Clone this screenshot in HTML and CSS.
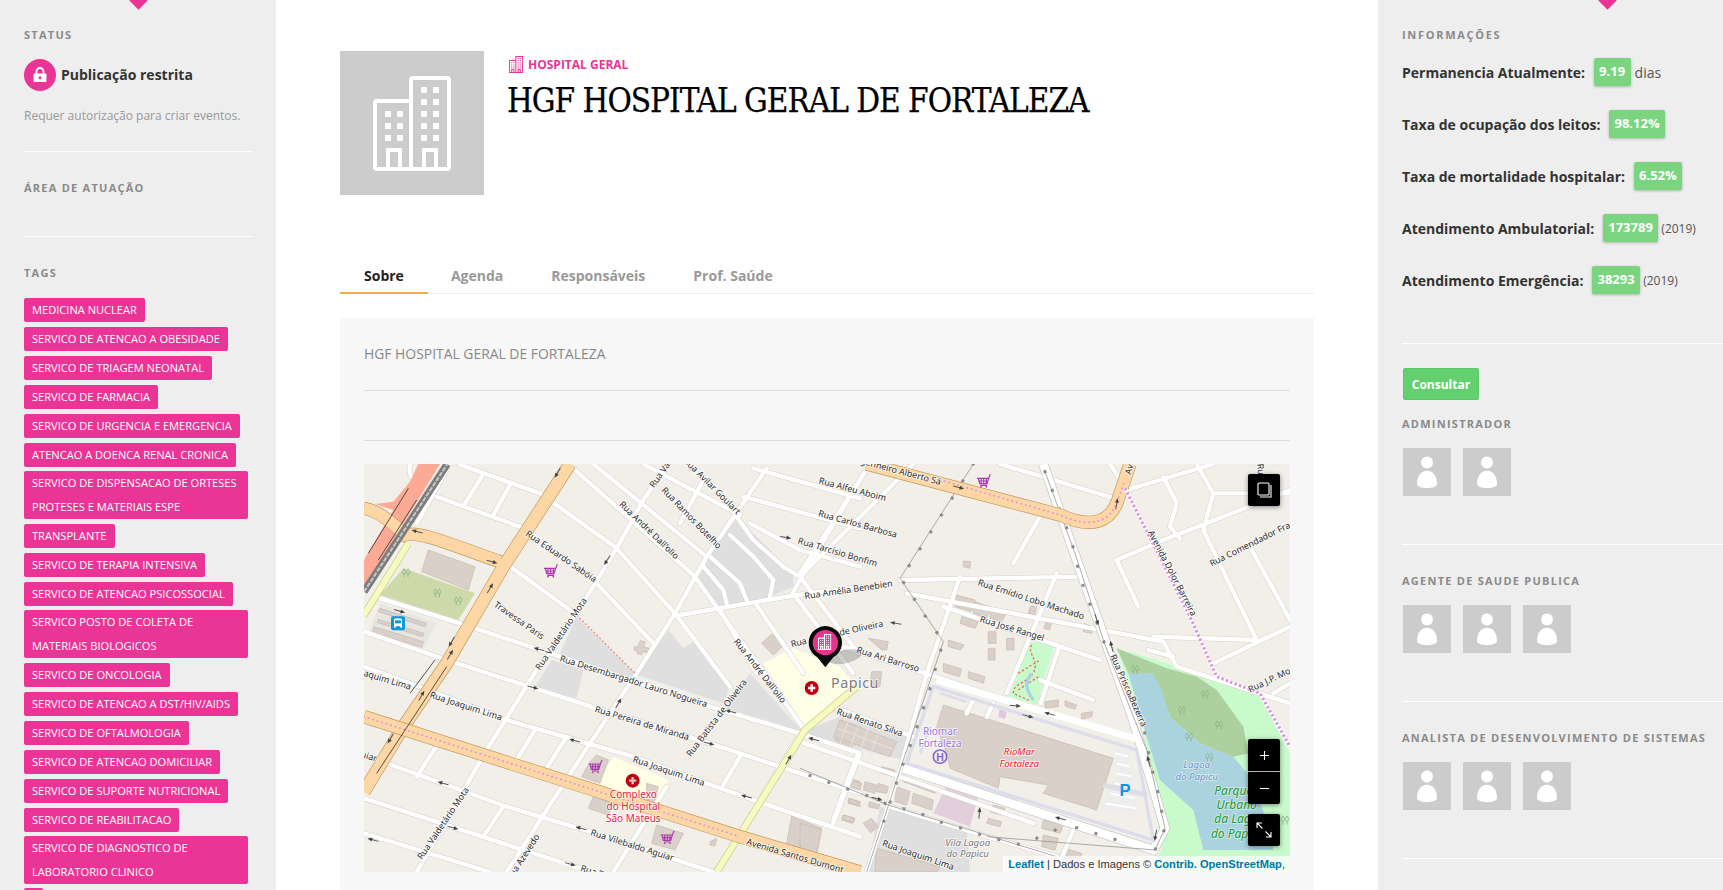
FILE: index.html
```html
<!DOCTYPE html>
<html lang="pt-BR">
<head>
<meta charset="utf-8">
<title>HGF Hospital Geral de Fortaleza</title>
<link rel="stylesheet" href="styles.css">
</head>
<body>
<svg class="defs" width="0" height="0" aria-hidden="true">
  <defs>
    <symbol id="building" viewBox="8 6 78 95">
      <path class="b-line" d="M10 99V33q0-2 2-2H46V10q0-2 2-2H82q2 0 2 2V97q0 2-2 2H12q-2 0-2-2ZM46 31V99M23 97V80H35V97M59 97V80H71V97"/>
      <path class="b-fill" d="M56 17h6v6h-6zM68 17h6v6h-6zM56 29h6v6h-6zM68 29h6v6h-6zM56 41h6v6h-6zM68 41h6v6h-6zM56 53h6v6h-6zM68 53h6v6h-6zM56 65h6v6h-6zM68 65h6v6h-6zM20 41h6v6h-6zM32 41h6v6h-6zM20 53h6v6h-6zM32 53h6v6h-6zM20 65h6v6h-6zM32 65h6v6h-6z"/>
    </symbol>
    <symbol id="person" viewBox="0 0 48 48">
      <circle class="p-fill" cx="24" cy="14.5" r="6"/>
      <path class="p-fill" d="M14 36C14 28 18 22.700 24 22.700S34 28 34 36C34 41.500 14 41.500 14 36Z"/>
    </symbol>
  </defs>
</svg>
<div class="page">
  <aside class="left">
    <span class="notch"></span>
    <section class="l-sec">
      <h4 class="label">Status</h4>
      <div class="status">
        <span class="status-ic">
          <svg width="14" height="16" viewBox="0 0 14 16"><path class="lock-arc" d="M3.500 7V4.500a3.500 3.500 0 0 1 7 0V7"/><path class="lock-body" fill-rule="evenodd" d="M1.500 6.500h11a1 1 0 0 1 1 1v6.500a1 1 0 0 1-1 1h-11a1 1 0 0 1-1-1V7.500a1 1 0 0 1 1-1ZM7 9.300a1.500 1.500 0 1 0 0 3 1.500 1.500 0 0 0 0-3Z"/></svg>
        </span>
        <strong>Publicação restrita</strong>
      </div>
      <p class="desc">Requer autorização para criar eventos.</p>
    </section>
    <section class="l-sec area">
      <h4 class="label">Área de atuação</h4>
    </section>
    <section class="l-sec tags-sec">
      <h4 class="label">Tags</h4>
      <div class="tags">
        <span class="tag">Medicina nuclear</span>
        <span class="tag">Servico de atencao a obesidade</span>
        <span class="tag">Servico de triagem neonatal</span>
        <span class="tag">Servico de farmacia</span>
        <span class="tag">Servico de urgencia e emergencia</span>
        <span class="tag">Atencao a doenca renal cronica</span>
        <span class="tag tight">Servico de dispensacao de orteses proteses e materiais espe</span>
        <span class="tag">Transplante</span>
        <span class="tag">Servico de terapia intensiva</span>
        <span class="tag">Servico de atencao psicossocial</span>
        <span class="tag tight">Servico posto de coleta de materiais biologicos</span>
        <span class="tag">Servico de oncologia</span>
        <span class="tag">Servico de atencao a DST/HIV/AIDS</span>
        <span class="tag">Servico de oftalmologia</span>
        <span class="tag">Servico de atencao domiciliar</span>
        <span class="tag">Servico de suporte nutricional</span>
        <span class="tag">Servico de reabilitacao</span>
        <span class="tag tight">Servico de diagnostico de laboratorio clinico</span>
        <span class="tag tight">&nbsp;</span>
      </div>
    </section>
  </aside>

  <main class="main">
    <header class="head">
      <div class="photo"><svg class="photo-ic" width="78" height="95"><use href="#building"/></svg></div>
      <div class="head-txt">
        <div class="cat"><svg class="cat-ic" width="14" height="17"><use href="#building"/></svg><span>HOSPITAL GERAL</span></div>
        <h1 class="title">HGF HOSPITAL GERAL DE FORTALEZA</h1>
      </div>
    </header>
    <nav class="tabs">
      <a class="tab on">Sobre</a>
      <a class="tab">Agenda</a>
      <a class="tab">Responsáveis</a>
      <a class="tab">Prof. Saúde</a>
    </nav>
    <section class="panel">
      <p class="about">HGF HOSPITAL GERAL DE FORTALEZA</p>
      <hr class="rule r1">
      <hr class="rule r2">
      <div class="map">
        <svg class="map-svg" viewBox="12 12 2778 1224" width="926" height="408">
          <defs>
            <g id="ar"><path class="ar-l" d="M-16 0H8"/><path class="ar-h" d="M4-6L18 0L4 6Z"/></g>
            <g id="cart"><path class="cart" d="M-20-8H15L20-20M-16-8L-12 8H10L15-8M-14 0H13M-8-8V8M0-8V8M8-8V8M-10 13H10"/><circle class="cart-w" cx="-8" cy="17" r="2.500"/><circle class="cart-w" cx="8" cy="17" r="2.500"/></g>
            <g id="tree"><path class="tree" d="M-6 12V0M6 12V0M-6-14C-12-6-12 2-6 2S0-6-6-14ZM6-14C0-6 0 2 6 2S12-6 6-14Z"/></g>
            <g id="roads">
              <path d="M150 12C145 40 150 55 172 62"/>
              <path d="M300 14L540 100L770 265L945 460L1110 680"/>
              <path d="M640 25L1005 350L1330 805"/>
              <path d="M700 12L1040 290"/>
              <path d="M850 12L1140 165"/>
              <path d="M230 110L480 200"/>
              <path d="M445 315L650 465"/>
              <path d="M705 365L885 555"/>
              <path d="M270 12L170 190"/>
              <path d="M365 50L315 130"/>
              <path d="M450 75L400 165"/>
              <path d="M1220 25L1040 290L945 460L830 640L690 850L560 1050L440 1236"/>
              <path d="M925 12L850 120L770 265L650 460L530 630L380 870L170 1236"/>
              <path d="M1500 60L1320 360L1295 405"/>
              <path d="M1030 60L960 190"/>
              <path d="M60 415L300 490L600 590L1050 740L1320 820L1500 880"/>
              <path d="M12 515L260 600L710 745L1050 850L1290 930L1500 1000"/>
              <path d="M12 620L150 670L440 780L820 890L1080 985L1500 1130"/>
              <path d="M80 910L440 1040L690 1115L1060 1236"/>
              <path d="M12 1015L660 1225"/>
              <path d="M12 1120L390 1236"/>
              <path d="M960 465L1310 405L1500 380"/>
              <path d="M1180 25L1500 115"/>
              <path d="M1150 110L1500 205"/>
              <path d="M1170 190L1320 270L1500 320"/>
              <path d="M1190 435L1330 640"/>
              <path d="M1080 450L1190 640"/>
              <path d="M1310 415L1480 640"/>
              <path d="M525 810L470 900"/>
              <path d="M620 830L550 940"/>
              <path d="M235 850L170 950"/>
              <path d="M430 1040L370 1130"/>
              <path d="M1140 890L1090 975"/>
              <path d="M1500 880L1420 1090"/>
              <path d="M1320 820L1210 1000"/>
              <path d="M920 980L760 1236"/>
              <path d="M1130 170L1180 240L1270 320L1310 345"/>
              <path d="M1110 225L1180 290L1240 360L1230 410"/>
              <path d="M1050 290L1140 370L1160 420"/>
              <path d="M1030 320L1090 390L1100 430"/>
              <g transform="translate(1320 0)">
                <path d="M480 350L380 640L300 930L200 1236"/>
                <path d="M300 360L840 350"/>
                <path d="M770 340L620 700"/>
                <path d="M778 560L722 730"/>
                <path d="M725 160L640 310"/>
                <path d="M340 12L0 350"/>
                <path d="M210 12L0 340"/>
                <path d="M0 350L175 580"/>
                <path d="M320 400L1090 545L1130 620L1470 730"/>
                <path d="M430 440L900 600"/>
                <path d="M130 560L620 720"/>
                <path d="M720 660L880 720"/>
                <path d="M110 745L340 830"/>
                <path d="M0 845L700 1090"/>
                <path d="M270 1040L530 1120L770 1190"/>
                <path d="M950 300L1090 240L1220 190L1470 90"/>
                <path d="M950 300L1015 440"/>
                <path d="M1090 50L1130 130L1110 200L1140 235"/>
                <path d="M1190 12L1240 100L1210 210L1370 540"/>
                <path d="M1240 100H1470"/>
                <path d="M1060 530L1370 540"/>
                <path d="M1240 610L1470 500"/>
                <path d="M1350 260L1470 480"/>
                <path d="M930 12L980 90L1240 12"/>
                <path d="M600 12L960 120"/>
                <path d="M1420 700L1470 670"/>
                <path d="M170 890L100 1080"/>
                <path d="M820 1110L770 1230"/>
                <path d="M1045 570L1120 590"/>
                <path d="M520 720L500 760"/>
                <path d="M580 730L560 770"/>
              </g>
            </g>
          </defs>

          <rect class="bg" x="12" y="12" width="2778" height="1224"/>

          <!-- land use -->
          <path class="resid" d="M650 470L825 640L805 655L595 590ZM575 600L670 630L650 715L525 680ZM925 510L970 565L1000 545L1110 680L1090 730L830 645ZM1170 640L1325 812L1100 745ZM1130 175L1200 240L1300 340L1300 380L1220 415L1080 440L1015 350L1060 270Z"/>
          <path class="resid-l" d="M60 430L230 490L190 565L30 510Z"/>
          <path class="hosp" d="M1210 610L1300 565L1440 620L1490 680L1335 800ZM760 890L925 960L895 1040L710 975Z"/>
          <path class="grass" d="M60 405L130 325L345 400L295 480Z"/>
          <g transform="translate(1320 0)">
            <path class="resid" d="M20 810L120 770L330 830L310 900L30 830ZM240 1040L500 1110L510 1236L200 1236Z"/>
            <path class="retail" d="M440 975L535 1010L510 1100L400 1060Z"/>
            <path class="wood-l" d="M950 565L1100 610L1250 660L1380 710L1470 880V1236H1040L1085 1170L1030 800Z"/>
            <path class="wood" d="M950 565L1100 625L1190 650L1250 690L1330 800L1345 880L1300 890L1200 850L1110 770L1080 680L985 640Z"/>
            <path class="water" d="M985 640L1060 640L1085 690L1110 770L1200 850L1300 890L1350 950L1400 1080L1420 1170L1210 1170L1180 1050L1080 960L1040 830Z"/>
            <path class="park" d="M680 545L765 550L710 735L628 710Z"/>
          </g>

          <!-- buildings -->
          <path class="bld" d="M205 270L345 320L325 390L185 335ZM1235 522L1272 555L1240 585L1205 550ZM690 905L710 885L745 900L720 970L665 950ZM700 1010L760 1030L745 1065L685 1045ZM890 1095L970 1120L945 1170L875 1150ZM860 970L895 980L885 1030L860 1020ZM1295 1068L1385 1105L1370 1180L1320 1165L1280 1150ZM1470 955L1500 965L1500 985L1465 978ZM1465 1015L1500 1025V1040L1465 1030ZM1450 1065L1485 1075L1478 1090L1445 1080ZM1050 1145L1070 1135L1065 1158L1050 1155Z"/>
          <path class="bld" d="M822 560L835 560L840 542L855 545L852 560L868 565L862 578L848 575L845 585L830 580L833 570L823 572Z"/>
          <path class="bld" d="M60 445L200 490L195 500L55 455ZM55 478L192 520L188 530L52 488ZM42 500L190 545L186 562L38 518Z"/>
          <path class="bld" d="M1440 780L1500 800L1475 860L1425 840Z"/>
          <g transform="translate(1320 0)">
            <path class="bld" d="M430 735L940 895L890 1050L730 1000L745 975L600 950L595 985L450 925L440 880L410 800ZM120 780L290 845L270 890L100 830ZM470 405L525 420L515 455L465 440ZM525 425L575 442L560 475L520 460ZM575 442L620 458L605 485L570 475ZM485 470L535 485L525 505L480 490ZM445 540L492 555L482 570L445 560ZM565 515H588V550H565ZM620 535H642V570H620ZM565 565H585V600H565ZM430 610L485 627L478 650L430 635ZM505 635L555 650L550 670L505 655ZM690 440L710 440L705 465L685 460ZM490 303L512 305L510 325L490 320ZM735 725L775 720L775 740L735 745ZM795 722L830 735L825 748L795 738ZM845 760L878 755L875 770L845 778ZM310 950L415 985L405 1000L310 965ZM290 980L330 995L320 1035L285 1025ZM340 1000L400 1020L395 1050L335 1030ZM150 960L185 970L180 990L145 980ZM195 965L230 975L225 1000L190 990ZM235 970L265 980L260 1000L230 995ZM245 920L285 930L280 950L245 940ZM148 1015L178 1025L175 1035L145 1027ZM208 1025L240 1035L235 1047L205 1040ZM130 1065L163 1075L160 1088L127 1080ZM190 1090L215 1075L235 1100L212 1118ZM580 1035L615 1045L605 1065L570 1055ZM565 1075L605 1085L600 1100L560 1090ZM730 1080L790 1095L780 1120L725 1105ZM730 1125L775 1135L765 1170L725 1160ZM0 1090L65 1110L50 1180L0 1170ZM795 1165L845 1180L830 1236H785ZM230 1165L420 1220L410 1236H225ZM740 480L755 490L748 510L732 505ZM852 490L880 500L875 520L850 515ZM205 535L265 545L260 570L245 570ZM215 635H245L240 680H210Z"/>
            <path class="bld-l" d="M150 770L120 850M180 782L150 862M210 793L180 873M240 805L210 885M112 805L280 868"/>
            <path class="bld-f" d="M598 748L620 755L615 778L595 770Z"/>
          </g>

          <!-- parking and paths -->
          <g transform="translate(1320 0)">
            <path class="lot" d="M945 860L985 870L1015 1060L900 1050L950 950Z"/>
            <path class="lot-l" d="M945 880L985 890M950 910L990 920M950 940L995 950M945 970L1000 985M930 1000L1005 1015M915 1030L1010 1045"/>
            <path class="pave" d="M910 975L1040 1005"/>
          </g>

          <use href="#roads" class="casing"/>
          <use href="#roads" class="minor"/>

          <!-- shopping ring road -->
          <g transform="translate(1320 0)">
            <path class="wide-c" d="M730 12L830 300L1000 780L1095 1105L1060 1170L310 925"/>
            <path class="wide" d="M730 12L830 300L1000 780L1095 1105L1060 1170L310 925"/>
            <path class="wide-t" d="M410 660L1020 840"/>
            <path class="ring" d="M400 680L1010 870L1060 1140L320 910Z"/>
            <path class="ring-i" d="M420 700L500 725M390 800L360 880"/>
            <path class="pow" d="M520 12L300 355L430 545L300 930L200 1236"/>
            <path class="pow" d="M735 35L825 280L915 555L1040 870L1095 1105L1065 1170L560 1130"/>
            <path class="pow" d="M0 925L265 1035L770 1190"/>
            <path class="pow-d" d="M520 12L448 128L378 238L303 355L370 460L430 545L412 605L392 680L343 825L300 935L238 1125"/>
            <path class="pow-d" d="M735 35L772 130L805 217L825 280L838 345L868 428L897 505L915 555L1030 797L1045 875L1060 945L1076 1006L1095 1105L1065 1170"/>
            <path class="pow-d" d="M30 947L100 972L165 995L233 1017L272 1040L345 1052L405 1082L470 1100L560 1130L665 1155L800 1095"/>
            <path class="pow-d" d="M830 1103L928 1133L982 1150"/>
          </g>

          <!-- major roads -->
          <path class="moto" d="M12 300L100 150L45 132L100 125L150 65L175 12H240L12 385Z"/>
          <path class="tert-c" d="M12 465L145 250"/><path class="tert" d="M12 465L145 250"/>
          <path class="tert-c" d="M1070 1236L1335 810L1490 680"/><path class="tert" d="M1070 1236L1335 810L1490 680"/>
          <path class="tr-c" d="M630 12L430 320L260 610L130 800L12 995"/>
          <path class="tr-c" d="M12 145C50 150 90 180 135 225C180 210 300 265 420 305"/>
          <path class="tr" d="M630 12L430 320L260 610L130 800L12 995"/>
          <path class="tr" d="M12 145C50 150 90 180 135 225C180 210 300 265 420 305"/>
          <path class="tr-c" d="M12 770L1140 1130L1500 1236"/>
          <path class="tr" d="M12 770L1140 1130L1500 1236"/>
          <path class="dash" d="M12 770L1140 1130"/>
          <path class="rail" d="M12 395L262 12"/>
          <path class="rail-l" d="M12 395L262 12"/>
          <path class="blk" d="M25 280L145 85M55 300L170 120M50 940L260 620M150 700L225 600"/>
          <g transform="translate(1320 0)">
            <path class="tr-c" d="M200 12L780 165C880 210 930 180 950 130L990 12"/>
            <path class="tr" d="M200 12L780 165C880 210 930 180 950 130L990 12"/>
            <path class="dash" d="M420 60L780 165C880 210 930 180 950 130L975 60"/>
            <path class="dash2-b" d="M975 85L1170 470L1250 650L1380 700L1470 860"/>
            <path class="dash2" d="M975 85L1170 470L1250 650L1380 700L1470 860"/>
            <path class="foot" d="M695 555C680 580 720 600 700 640C680 670 640 670 640 700L690 722M655 640L720 600M655 690L715 650"/>
            <path class="pond" d="M695 640C680 660 670 680 700 720"/>
          </g>
          <path class="red-d" d="M650 465L825 640"/>

          <!-- arrows -->
          <use href="#ar" transform="translate(593 38) rotate(120)"/>
          <use href="#ar" transform="translate(172 215) rotate(195)"/>
          <use href="#ar" transform="translate(395 305) rotate(15)"/>
          <use href="#ar" transform="translate(390 385) rotate(-60)"/>
          <use href="#ar" transform="translate(275 545) rotate(120)"/>
          <use href="#ar" transform="translate(270 585) rotate(-60)"/>
          <use href="#ar" transform="translate(184 708) rotate(-60)"/>
          <use href="#ar" transform="translate(92 835) rotate(120)"/>
          <use href="#ar" transform="translate(118 453) rotate(17)"/>
          <use href="#ar" transform="translate(742 300) rotate(122)"/>
          <use href="#ar" transform="translate(1276 232) rotate(10)"/>
          <use href="#ar" transform="translate(538 568) rotate(195)"/>
          <use href="#ar" transform="translate(518 682) rotate(15)"/>
          <use href="#ar" transform="translate(775 730) rotate(-60)"/>
          <use href="#ar" transform="translate(1113 755) rotate(195)"/>
          <use href="#ar" transform="translate(645 842) rotate(195)"/>
          <use href="#ar" transform="translate(1046 850) rotate(15)"/>
          <use href="#ar" transform="translate(250 970) rotate(195)"/>
          <use href="#ar" transform="translate(278 1103) rotate(15)"/>
          <use href="#ar" transform="translate(664 1105) rotate(195)"/>
          <use href="#ar" transform="translate(630 1212) rotate(15)"/>
          <use href="#ar" transform="translate(40 1140) rotate(195)"/>
          <use href="#ar" transform="translate(1160 1010) rotate(195)"/>
          <use href="#ar" transform="translate(1285 900) rotate(-60)"/>
          <use href="#ar" transform="translate(1362 838) rotate(195)"/>
          <g transform="translate(1320 0)">
            <use href="#ar" transform="translate(475 82) rotate(15)"/>
            <use href="#ar" transform="translate(950 132) rotate(-80)"/>
            <use href="#ar" transform="translate(288 490) rotate(190)"/>
            <use href="#ar" transform="translate(890 478) rotate(72)"/>
            <use href="#ar" transform="translate(935 560) rotate(-105)"/>
            <use href="#ar" transform="translate(645 737) rotate(5)"/>
            <use href="#ar" transform="translate(683 768) rotate(15)"/>
            <use href="#ar" transform="translate(750 762) rotate(195)"/>
            <use href="#ar" transform="translate(1046 905) rotate(-105)"/>
            <use href="#ar" transform="translate(1067 1125) rotate(100)"/>
            <use href="#ar" transform="translate(782 1076) rotate(195)"/>
            <use href="#ar" transform="translate(538 1060) rotate(-85)"/>
            <use href="#ar" transform="translate(230 1016) rotate(15)"/>
          </g>

          <!-- trees -->
          <g transform="translate(1320 0)">
            <use href="#tree" transform="translate(1005 630)"/>
            <use href="#tree" transform="translate(1146 752)"/>
            <use href="#tree" transform="translate(1257 797)"/>
            <use href="#tree" transform="translate(1167 833)"/>
            <use href="#tree" transform="translate(1228 893)"/>
            <use href="#tree" transform="translate(1215 705)"/>
            <use href="#tree" transform="translate(1455 1082)"/>
          </g>
          <use href="#tree" transform="translate(138 340)"/>
          <use href="#tree" transform="translate(232 400)"/>
          <use href="#tree" transform="translate(295 424)"/>

          <!-- map labels -->
          <g class="lbl">
            <text transform="translate(495 225) rotate(34.600)">Rua Eduardo Sabóia</text>
            <text transform="translate(776 135) rotate(44)">Rua André Dall'olio</text>
            <text transform="translate(903 92) rotate(46)">Rua Ramos Botelho</text>
            <text transform="translate(1130 165) rotate(45)" text-anchor="end">Rua Avilar Goulart</text>
            <text transform="translate(882 85) rotate(-55)">Rua Valdetário</text>
            <text transform="translate(1375 70) rotate(15)">Rua Alfeu Aboim</text>
            <text transform="translate(1373 168) rotate(15.500)">Rua Carlos Barbosa</text>
            <text transform="translate(1312 250) rotate(16.500)">Rua Tarcísio Bonfim</text>
            <text transform="translate(1335 418) rotate(-8.500)">Rua Amélia Benebien</text>
            <text transform="translate(400 438) rotate(35)">Travessa Paris</text>
            <text transform="translate(540 632) rotate(-56)">Rua Valdetário Mota</text>
            <text transform="translate(598 603) rotate(17.500)">Rua Desembargador Lauro Nogueira</text>
            <text transform="translate(150 690) rotate(17)" text-anchor="end">Rua Joaquim Lima</text>
            <text transform="translate(208 712) rotate(18)">Rua Joaquim Lima</text>
            <text transform="translate(703 755) rotate(17)">Rua Pereira de Miranda</text>
            <text transform="translate(992 892) rotate(-53)">Rua Batista de Oliveira</text>
            <text transform="translate(1120 545) rotate(52)">Rua André Dall'olio</text>
            <text transform="translate(817 905) rotate(19)">Rua Joaquim Lima</text>
            <text transform="translate(690 1125) rotate(17.500)">Rua Vilebaldo Aguiar</text>
            <text transform="translate(186 1200) rotate(-56)">Rua Valdetário Mota</text>
            <text transform="translate(540 1130) rotate(-57)" text-anchor="end">Rua Azevedo</text>
            <text transform="translate(48 905) rotate(17)" text-anchor="end">Aguiar</text>
            <text transform="translate(660 1232) rotate(17)">Rua F</text>
            <text transform="translate(1158 1153) rotate(16.500)">Avenida Santos Dumont</text>
            <text transform="translate(1295 562) rotate(-14)">Rua</text>
            <g transform="translate(1320 0)">
              <text transform="translate(120 527) rotate(-12)">de Oliveira</text>
              <text transform="translate(168 577) rotate(17.500)">Rua Ari Barroso</text>
              <text transform="translate(108 762) rotate(19)">Rua Renato Silva</text>
              <text transform="translate(532 375) rotate(18)">Rua Emídio Lobo Machado</text>
              <text transform="translate(538 485) rotate(17)">Rua José Rangel</text>
              <text transform="translate(930 588) rotate(66)">Rua Prisco Bezerra</text>
              <text transform="translate(1043 217) rotate(62.500)">Avenida Dolor Barreira</text>
              <text transform="translate(1235 320) rotate(-26.500)">Rua Comendador Fra</text>
              <text transform="translate(1350 698) rotate(-25.600)">Rua J.P. Mo</text>
              <text transform="translate(245 1157) rotate(19)">Rua Joaquim Lima</text>
              <text transform="translate(420 75) rotate(15)" text-anchor="end">Engenheiro Alberto Sá</text>
              <text transform="translate(992 45) rotate(-75)">Av</text>
              <text transform="translate(1372 12) rotate(85)">Ru</text>
            </g>
          </g>
          <text class="lbl-red" x="820" y="1015">Complexo</text>
          <text class="lbl-red" x="820" y="1050">do Hospital</text>
          <text class="lbl-red" x="820" y="1086">São Mateus</text>
          <g transform="translate(1320 0)">
            <text class="lbl-town" x="93" y="685">Papicu</text>
            <text class="lbl-pur" x="420" y="825">Riomar</text>
            <text class="lbl-pur" x="420" y="860">Fortaleza</text>
            <circle class="h-c" cx="420" cy="890" r="20"/>
            <text class="h-t" x="420" y="902">H</text>
            <text class="lbl-shop" x="658" y="885">RioMar</text>
            <text class="lbl-shop" x="658" y="920">Fortaleza</text>
            <text class="lbl-lake" x="1190" y="925">Lagoa</text>
            <text class="lbl-lake" x="1190" y="960">do Papicu</text>
            <text class="lbl-park" x="1300" y="1005">Parque</text>
            <text class="lbl-park" x="1310" y="1047">Urbano</text>
            <text class="lbl-park" x="1318" y="1090">da Lagoa</text>
            <text class="lbl-park" x="1312" y="1133">do Papicu</text>
            <text class="lbl-vila" x="503" y="1157">Vila Lagoa</text>
            <text class="lbl-vila" x="503" y="1192">do Papicu</text>
            <text class="lbl-p" x="975" y="1008">P</text>
          </g>

          <!-- map pois -->
          <use href="#cart" transform="translate(572 333)"/>
          <use href="#cart" transform="translate(706 920)"/>
          <use href="#cart" transform="translate(922 1133)"/>
          <use href="#cart" transform="translate(1871 63)"/>
          <rect class="bus" x="93" y="469" width="42" height="42" rx="6"/>
          <path class="bus-w" d="M102 477q12-4 24 0v26h-5v-4h-14v4h-5Z"/>
          <path class="bus-g" d="M105 481h18v9h-18z"/>
          <circle class="hos-c" cx="1355" cy="684" r="21"/><path class="hos-p" d="M1355 673v22M1344 684h22"/>
          <circle class="hos-c" cx="818" cy="962" r="21"/><path class="hos-g" d="M818 951v22M807 962h22"/>

          <!-- pin -->
          <ellipse class="pin-sh" cx="1455" cy="590" rx="50" ry="20" transform="rotate(-12 1455 590)"/>
          <path class="pin" d="M1396 622L1372 592A50 50 0 1 1 1420 592Z"/>
          <circle class="pin-in" cx="1396" cy="548" r="38"/>
          <use href="#building" x="1374" y="522" width="40" height="48" class="pin-ic"/>
        </svg>

        <button class="ctl ctl-layers" aria-label="Camadas">
          <svg width="15" height="16" viewBox="0 0 15 16"><rect class="ctl-l" x="1" y="1" width="11" height="12" rx="1"/><path class="ctl-l" d="M14 3V15H3"/></svg>
        </button>
        <div class="ctl-col">
          <button class="ctl ctl-z" aria-label="Aproximar"><svg width="11" height="11" viewBox="0 0 11 11"><path class="ctl-l" d="M5.500 1V10M1 5.500H10"/></svg></button>
          <button class="ctl ctl-z" aria-label="Afastar"><svg width="11" height="11" viewBox="0 0 11 11"><path class="ctl-l" d="M1 5.500H10"/></svg></button>
          <button class="ctl ctl-fs" aria-label="Tela cheia"><svg width="16" height="16" viewBox="0 0 16 16"><path class="ctl-l" d="M1 6V1H6M1 1L6.500 6.500M15 10V15H10M15 15L9.500 9.500"/></svg></button>
        </div>
        <div class="attrib"><a>Leaflet</a> | Dados e Imagens © <a>Contrib. OpenStreetMap</a>,</div>
      </div>
    </section>
  </main>

  <aside class="right">
    <span class="notch"></span>
    <section class="r-sec info">
      <h4 class="label label-wide">Informações</h4>
      <div class="stats">
        <div class="stat"><b>Permanencia Atualmente:</b><span class="badge">9.19</span><span class="unit">dias</span></div>
        <div class="stat"><b>Taxa de ocupação dos leitos:</b><span class="badge">98.12%</span></div>
        <div class="stat"><b>Taxa de mortalidade hospitalar:</b><span class="badge">6.52%</span></div>
        <div class="stat"><b>Atendimento Ambulatorial:</b><span class="badge">173789</span><small>(2019)</small></div>
        <div class="stat"><b>Atendimento Emergência:</b><span class="badge">38293</span><small>(2019)</small></div>
      </div>
    </section>
    <section class="r-sec admin">
      <button class="btn">Consultar</button>
      <h4 class="label lab-admin">Administrador</h4>
      <div class="people">
        <svg class="avatar"><use href="#person"/></svg>
        <svg class="avatar"><use href="#person"/></svg>
      </div>
    </section>
    <section class="r-sec group">
      <h4 class="label">Agente de saude publica</h4>
      <div class="people">
        <svg class="avatar"><use href="#person"/></svg>
        <svg class="avatar"><use href="#person"/></svg>
        <svg class="avatar"><use href="#person"/></svg>
      </div>
    </section>
    <section class="r-sec group">
      <h4 class="label">Analista de desenvolvimento de sistemas</h4>
      <div class="people">
        <svg class="avatar"><use href="#person"/></svg>
        <svg class="avatar"><use href="#person"/></svg>
        <svg class="avatar"><use href="#person"/></svg>
      </div>
    </section>
  </aside>
</div>
</body>
</html>
```

FILE: styles.css
```css
* { box-sizing: border-box; }
html, body { margin: 0; height: 100%; overflow: hidden; }
body { font-family: "Open Sans", "Noto Sans", sans-serif; color: #333; background: #fff; }
.defs { position: absolute; }
.page { display: flex; height: 890px; overflow: hidden; }

.left, .right { position: relative; background: #eee; flex: none; }
.left { width: 276px; padding: 0 24px; }
.right { width: 345px; padding-left: 24px; }
.main { flex: 1; padding: 51px 64px 0; min-width: 0; }

.notch { position: absolute; top: -6px; width: 13px; height: 13px; background: #ea3596; transform: rotate(45deg); }
.left .notch { left: 132px; }
.right .notch { left: 223px; }

.label { margin: 0; font-size: 11px; line-height: 16px; font-weight: 700; letter-spacing: 1.25px; text-transform: uppercase; color: #8a8a8a; }
.label-wide { letter-spacing: 1.7px; }

.l-sec { border-bottom: 1px solid #fff; }
.l-sec:first-of-type { padding: 27px 0 26px; }
.l-sec.area { padding: 28px 0 40px; }
.l-sec.tags-sec { padding-top: 28px; border: 0; }
.status { display: flex; align-items: center; gap: 5px; margin-top: 16px; font-size: 14px; }
.status strong { color: #333; padding-bottom: 2px; }
.status-ic { width: 32px; height: 32px; border-radius: 50%; background: #ea3596; display: flex; align-items: center; justify-content: center; }
.lock-arc { fill: none; stroke: #fff; stroke-width: 1.800; }
.lock-body { fill: #fff; }
.desc { margin: 15px 0 -1px; font-size: 12px; line-height: 20px; color: #999; }

.tags { display: flex; flex-direction: column; align-items: flex-start; gap: 5px; margin-top: 17px; }
.tag { display: block; padding: 0 8px; max-width: 224px; font-size: 11.1px; line-height: 24px; text-transform: uppercase; color: #fff; background: #ea3596; border-radius: 2px; }
.tag.tight { margin-top: -1px; }

.head { display: flex; height: 144px; }
.photo { width: 144px; height: 144px; background: #ccc; flex: none; display: flex; align-items: center; justify-content: center; }
.photo-ic { color: #fff; }
.b-line { fill: none; stroke: currentColor; stroke-width: var(--bw, 4); }
.b-fill { fill: currentColor; }
.head-txt { margin-left: 24px; }
.cat { display: flex; align-items: center; gap: 5px; margin: 5px 0 0 1px; height: 16px; font-size: 12px; font-weight: 700; color: #ea3596; }
.cat-ic { color: #ea3596; flex: none; --bw: 6; }
.title { margin: 9px 0 0 -1px; font-family: "DejaVu Serif Condensed", "DejaVu Serif", "Liberation Serif", serif; font-size: 33px; line-height: 40px; letter-spacing: -1.03px; font-weight: 400; color: #000; -webkit-text-stroke: .25px #000; white-space: nowrap; }

.tabs { display: flex; margin-top: 63px; height: 36px; border-bottom: 1px solid #eee; }
.tab { padding: 0 24px; height: 36px; font-size: 14px; line-height: 36px; font-weight: 700; color: #999; }
.tab.on { color: #222; border-bottom: 2px solid #f0ad4e; margin-right: -1px; }

.panel { margin-top: 24px; padding: 24px; background: #f7f7f7; height: 700px; }
.about { margin: 0; font-size: 13.9px; line-height: 24px; color: #888; }
.rule { margin: 0; border: 0; border-top: 1px solid #ddd; }
.r1 { margin-top: 24px; }
.r2 { margin-top: 49px; }

.map { position: relative; margin-top: 23px; width: 926px; height: 408px; overflow: hidden; }
.map-svg { display: block; }
.bg { fill: #f2efe9; }
.resid { fill: #e0dfdf; }
.resid-l { fill: #e8e6e1; }
.hosp { fill: #ffffe5; }
.grass { fill: #cdd9a8; }
.retail { fill: #e3cfdc; }
.wood-l { fill: #c8facc; }
.wood { fill: #add19e; }
.water { fill: #aad3df; }
.park { fill: #c8facc; }
.bld { fill: #d9d0c9; stroke: #c5b8ad; stroke-width: 2; }
.bld-l { fill: none; stroke: #e8e4de; stroke-width: 3; }
.bld-f { fill: #dfc8dc; }
.lot { fill: #ededed; }
.lot-l { stroke: #fff; stroke-width: 5; fill: none; }
.pave { stroke: #dddde8; stroke-width: 16; fill: none; }

.casing, .minor { fill: none; stroke-linejoin: round; stroke-linecap: round; }
.casing { stroke: #d4d0c8; stroke-width: 16; }
.minor { stroke: #fff; stroke-width: 13; }
.wide-c { fill: none; stroke: #c8c5c0; stroke-width: 30; }
.wide { fill: none; stroke: #fff; stroke-width: 26; }
.wide-t { fill: none; stroke: #fff; stroke-width: 20; }
.ring { fill: none; stroke: #dcdcea; stroke-width: 10; }
.ring-i { fill: none; stroke: #dcdcea; stroke-width: 8; }
.pow { fill: none; stroke: #9a9a9a; stroke-width: 2.500; }
.pow-d { fill: none; stroke: #8a8a8a; stroke-width: 9; stroke-linecap: square; stroke-dasharray: 0.100 60; }

.moto { fill: #fcaa96; }
.tert-c { fill: none; stroke: #c6c98e; stroke-width: 22; }
.tert { fill: none; stroke: #f7fabf; stroke-width: 18; }
.tr-c { fill: none; stroke: #c09a5e; stroke-width: 40; }
.tr { fill: none; stroke: #fcd6a4; stroke-width: 36; }
.dash { fill: none; stroke: #d99ad9; stroke-width: 6; stroke-linecap: round; stroke-dasharray: 0.100 14; }
.dash2-b { fill: none; stroke: #fff; stroke-width: 11; }
.dash2 { fill: none; stroke: #dc8fdc; stroke-width: 9; stroke-dasharray: 7 7; }
.rail { fill: none; stroke: #7c7c7c; stroke-width: 22; }
.rail-l { fill: none; stroke: #c8c8c8; stroke-width: 6; stroke-dasharray: 14 4; }
.blk { fill: none; stroke: #333; stroke-width: 2.500; }
.foot { fill: none; stroke: #ef6a5a; stroke-width: 4; stroke-dasharray: 7 6; }
.pond { fill: none; stroke: #aad3df; stroke-width: 10; }
.red-d { fill: none; stroke: #f38b7e; stroke-width: 4; stroke-dasharray: 6 6; }

.ar-l { stroke: #555; stroke-width: 3; fill: none; }
.ar-h { fill: #444; }
.cart { fill: none; stroke: #ac39ac; stroke-width: 3.500; }
.cart-w { fill: #ac39ac; }
.tree { fill: none; stroke: #8fb58a; stroke-width: 2.500; }

.lbl text { font-family: "Noto Sans", "DejaVu Sans", sans-serif; font-size: 26.7px; fill: #2a2a2a; stroke: rgba(255,255,255,.8); stroke-width: 5px; paint-order: stroke; }
.lbl-red, .lbl-pur, .lbl-shop, .lbl-lake, .lbl-park, .lbl-vila, .h-t { font-family: "Noto Sans", "DejaVu Sans", sans-serif; text-anchor: middle; paint-order: stroke; stroke: rgba(255,255,255,.8); stroke-width: 5px; }
.lbl-red { font-size: 30px; fill: #dc2740; }
.lbl-pur { font-size: 30px; fill: #9a78d8; }
.lbl-shop { font-size: 29px; font-style: italic; fill: #e5191c; }
.lbl-lake { font-size: 29px; font-style: italic; fill: #6a94c8; stroke: rgba(255,255,255,.55); }
.lbl-park { font-size: 36px; font-style: italic; fill: #1c9a2c; stroke: rgba(255,255,255,.5); }
.lbl-vila { font-size: 29px; font-style: italic; fill: #777; }
.lbl-town { font-family: "Noto Sans", "DejaVu Sans", sans-serif; font-size: 43px; letter-spacing: 1.500px; fill: #7b7b85; stroke: rgba(255,255,255,.8); stroke-width: 5px; paint-order: stroke; }
.lbl-p { font-family: "Liberation Sans", sans-serif; font-size: 50px; font-weight: 700; text-anchor: middle; fill: #0f96dc; }
.h-c { fill: none; stroke: #8a6cce; stroke-width: 5; }
.h-t { font-size: 32px; font-weight: 700; fill: #8a6cce; stroke-width: 0; }
.bus { fill: #0f96dc; }
.bus-w { fill: #fff; }
.bus-g { fill: #0f96dc; }
.hos-c { fill: #bf0011; }
.hos-p { stroke: #fff; stroke-width: 7; }
.hos-g { stroke: #c8c8d0; stroke-width: 7; }
.pin-sh { fill: rgba(90,90,90,.3); }
.pin { fill: #0a0a0a; }
.pin-in { fill: #e5338f; }
.pin-ic { color: #fff; --bw: 7; }

.ctl { display: flex; align-items: center; justify-content: center; width: 32px; height: 32px; padding: 0; border: 0; background: #000; border-radius: 2px; box-shadow: 0 1px 5px rgba(0,0,0,.45); }
.ctl-l { fill: none; stroke: #fff; stroke-width: 1.100; }
.ctl-layers { position: absolute; top: 10px; right: 10px; }
.ctl-col { position: absolute; right: 10px; bottom: 26px; display: flex; flex-direction: column; }
.ctl-z:first-child { border-bottom: 1px solid #ccc; height: 33px; border-radius: 2px 2px 0 0; }
.ctl-z:nth-child(2) { border-radius: 0 0 2px 2px; }
.ctl-fs { margin-top: 10px; }
.attrib { position: absolute; right: 0; bottom: 0; height: 16px; padding: 0 5px; font-family: "Liberation Sans", Arial, sans-serif; font-size: 11.1px; line-height: 16px; color: #333; background: rgba(255,255,255,.7); white-space: nowrap; }
.attrib a { color: #0078a8; font-weight: 700; }

.r-sec { border-bottom: 1px solid #fff; }
.info { padding: 27px 0 49px; }
.stats { display: flex; flex-direction: column; gap: 24px; margin-top: 15px; }
.stat { display: flex; align-items: center; height: 28px; font-size: 14px; }
.stat b { color: #333; }
.badge { margin-left: 8.500px; padding: 0 5.500px; height: 28px; font-size: 13px; line-height: 27px; font-weight: 700; color: #fff; background: #7bd580; border-radius: 2px; box-shadow: 0 1px 3px rgba(0,0,0,.25); }
.unit { margin-left: 4px; color: #555; }
.stat small { margin-left: 3px; font-size: 12px; color: #555; }
.admin { padding: 24px 0 48px; }
.btn { display: block; margin-left: 1px; width: 76px; height: 32px; padding: 0; font-family: inherit; font-size: 12px; font-weight: 700; color: #fff; background: #62d06e; border: 1px solid #5cc768; border-radius: 2px; }
.lab-admin { margin-top: 16px; }
.group { padding: 28px 0 48px; }
.people { display: flex; gap: 12px; margin: 16px 0 0 1px; }
.avatar { width: 48px; height: 48px; background: #ccc; display: block; }
.p-fill { fill: #fff; }
```
